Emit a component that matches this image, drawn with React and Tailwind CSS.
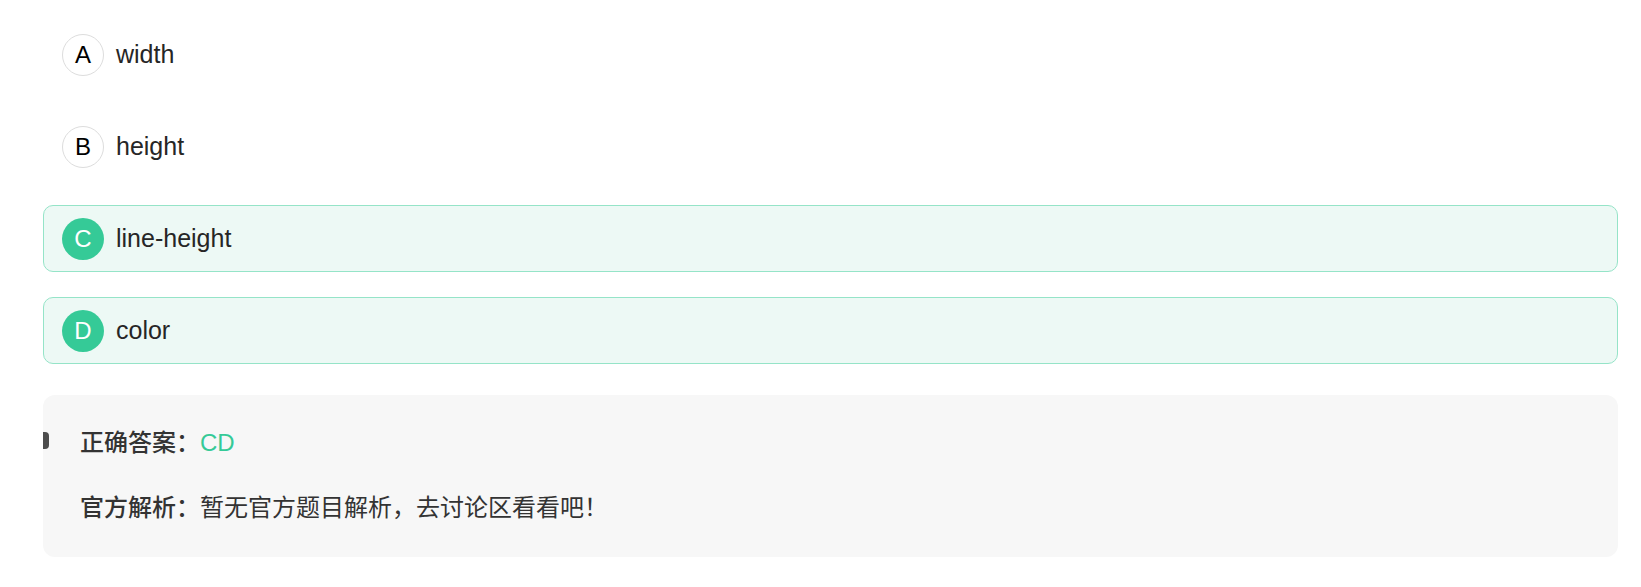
import React from "react";

const options = [
  { key: "A", text: "width", correct: false },
  { key: "B", text: "height", correct: false },
  { key: "C", text: "line-height", correct: true },
  { key: "D", text: "color", correct: true },
];

export default function App() {
  return (
    <div
      className="w-full bg-white pl-[43px] pr-[23px] pt-[21px] pb-[30px] text-[#333333]"
      style={{ fontFamily: '"Liberation Sans", "Noto Sans CJK SC", sans-serif' }}
    >
      <div className="flex flex-col gap-[25px]">
        {options.map((o) => (
          <div
            key={o.key}
            className={
              o.correct
                ? "flex h-[67px] items-center rounded-[10px] border border-[#95e4c8] bg-[#edf9f5] pl-[18px]"
                : "flex h-[67px] items-center rounded-[10px] border border-transparent pl-[18px]"
            }
          >
            <div
              className={
                o.correct
                  ? "flex h-[42px] w-[42px] items-center justify-center rounded-full bg-[#35ca97] text-[24px] leading-none text-white"
                  : "flex h-[42px] w-[42px] items-center justify-center rounded-full border border-[#dddddd] bg-white text-[24px] leading-none text-black"
              }
            >
              {o.key}
            </div>
            <span className="ml-[12px] text-[25px] leading-none text-[#262626]">{o.text}</span>
          </div>
        ))}
      </div>

      <div className="relative mt-[31px] rounded-[12px] bg-[#f7f7f7] pl-[37px] pt-[30px] pb-[31px]">
        <div className="absolute left-0 top-[37px] h-[17px] w-[6px] rounded-r-[4px] bg-[#4d4d4d]" />
        <div className="flex h-[36px] items-center text-[24px]">
          <span className="font-medium text-[#333333]">正确答案：</span>
          <span className="text-[#35ca97]">CD</span>
        </div>
        <div className="mt-[29px] flex h-[36px] items-center text-[24px]">
          <span className="font-medium text-[#333333]">官方解析：</span>
          <span className="text-[#333333]">暂无官方题目解析，去讨论区看看吧！</span>
        </div>
      </div>
    </div>
  );
}
